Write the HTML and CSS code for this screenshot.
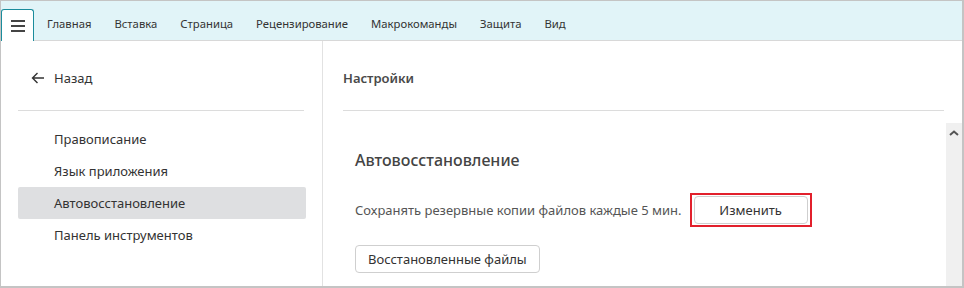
FILE: index.html
```html
<!DOCTYPE html>
<html>

<head>
    <meta name="viewport" content="width=device-width, initial-scale=1">
    <link rel="stylesheet" href="styles.css">
</head>

<body>
    <div class="window">
        <!-- Top ribbon with tabs -->
        <div class="ribbon">
            <div class="menuBtn">
                <span></span><span></span><span></span>
            </div>
            <div class="tab">Главная</div>
            <div class="tab">Вставка</div>
            <div class="tab">Страница</div>
            <div class="tab">Рецензирование</div>
            <div class="tab">Макрокоманды</div>
            <div class="tab">Защита</div>
            <div class="tab">Вид</div>
        </div>

        <div class="main">
            <!-- Left navigation -->
            <div class="sidebar">
                <div class="back">
                    <svg width="14" height="12" viewBox="0 0 14 12">
                        <path d="M13 6H1.5M6.5 1L1.5 6l5 5" fill="none" stroke="#333" stroke-width="1.4"/>
                    </svg>
                    <span>Назад</span>
                </div>
                <ul class="nav">
                    <li>Правописание</li>
                    <li>Язык приложения</li>
                    <li class="active">Автовосстановление</li>
                    <li>Панель инструментов</li>
                </ul>
            </div>

            <!-- Settings content -->
            <div class="content">
                <div class="title">Настройки</div>
                <div class="pane">
                    <div class="section">
                        <h3>Автовосстановление</h3>
                        <div class="row">
                            <span>Сохранять резервные копии файлов каждые 5 мин.</span>
                            <div class="highlight">
                                <button class="btn wide">Изменить</button>
                            </div>
                        </div>
                        <button class="btn">Восстановленные файлы</button>
                    </div>
                    <div class="scrollbar">
                        <svg width="10" height="6" viewBox="0 0 10 6">
                            <path d="M1 5l4-3.5L9 5" fill="none" stroke="#555" stroke-width="2"/>
                        </svg>
                    </div>
                </div>
            </div>
        </div>
    </div>
</body>

</html>
```

FILE: styles.css
```css
* {
    box-sizing: border-box;
}

body {
    margin: 0;
    font-family: 'Noto Sans', 'Open Sans', sans-serif;
    color: #333;
}

.window {
    width: 964px;
    height: 288px;
    border: 1px solid #c4c4c4;
    border-right-width: 2px;
    border-bottom-width: 2px;
    display: flex;
    flex-direction: column;
    overflow: hidden;
}

/* Ribbon */

.ribbon {
    height: 40px;
    background: #e1f4f8;
    border-bottom: 1px solid #d8d8d8;
    display: flex;
    align-items: flex-end;
    gap: 23px;
}

.menuBtn {
    width: 33px;
    height: 32px;
    margin-bottom: -1px;
    margin-right: -10px;
    background: #fff;
    border: 1px solid #1b8c9c;
    border-bottom: none;
    border-radius: 3px 3px 0 0;
    display: flex;
    flex-direction: column;
    justify-content: center;
    align-items: center;
    gap: 3px;
}

.menuBtn span {
    width: 14px;
    height: 2px;
    background: #444;
}

.tab {
    font-size: 11.3px;
    line-height: 16px;
    padding: 0 0 8px;
    color: #333;
}

/* Main area */

.main {
    flex: 1;
    display: flex;
}

.sidebar {
    width: 322px;
    border-right: 1px solid #e2e2e2;
    padding: 0 16px 0 17px;
}

.back {
    height: 70px;
    border-bottom: 1px solid #dcdcdc;
    margin-right: 2px;
    display: flex;
    align-items: center;
    padding: 4px 0 0 13px;
    font-size: 13px;
    gap: 9px;
}

.nav {
    list-style: none;
    margin: 12px 0 0;
    padding: 0;
}

.nav li {
    height: 32px;
    line-height: 32px;
    padding-left: 36px;
    font-size: 13px;
    border-radius: 2px;
}

.nav li.active {
    background: #dedfe1;
}

.content {
    flex: 1;
    display: flex;
    flex-direction: column;
}

.title {
    height: 70px;
    margin: 0 18px 0 20px;
    border-bottom: 1px solid #dcdcdc;
    display: flex;
    align-items: center;
    padding-top: 4px;
    font-size: 13px;
    font-weight: 600;
    color: #4a4a4a;
}

.pane {
    flex: 1;
    display: flex;
    padding-top: 12px;
}

.section {
    flex: 1;
    padding: 26px 0 0 32px;
}

.section h3 {
    margin: 0 0 22px;
    font-size: 16px;
    font-weight: 500;
    color: #444;
}

.row {
    display: flex;
    align-items: center;
    gap: 8px;
    font-size: 13px;
    color: #555;
    margin-bottom: 18px;
}

.highlight {
    border: 2px solid #e2202c;
    padding: 1px 2px;
}

.btn {
    font-family: inherit;
    font-size: 13px;
    color: #333;
    background: #fff;
    border: 1px solid #cfcfcf;
    border-radius: 4px;
    height: 28px;
    padding: 0 12px;
}

.btn.wide {
    width: 114px;
}

.scrollbar {
    width: 16px;
    background: #f0f0f0;
    display: flex;
    justify-content: center;
    padding-top: 7px;
}
```
